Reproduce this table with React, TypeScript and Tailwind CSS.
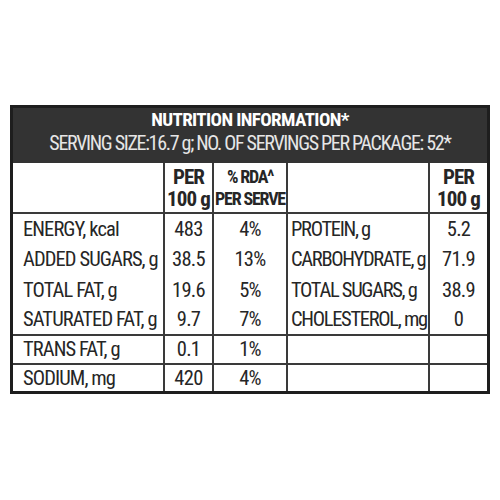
import React from "react";

const font = {
  fontFamily: "'Roboto Condensed', 'DejaVu Sans Condensed', Roboto, sans-serif",
};

const left = [
  ["ENERGY, kcal", "483", "4%"],
  ["ADDED SUGARS, g", "38.5", "13%"],
  ["TOTAL FAT, g", "19.6", "5%"],
  ["SATURATED FAT, g", "9.7", "7%"],
];
const right = [
  ["PROTEIN, g", "5.2"],
  ["CARBOHYDRATE, g", "71.9"],
  ["TOTAL SUGARS, g", "38.9"],
  ["CHOLESTEROL, mg", "0"],
];

const line = "border-[#3a3a3a]";
const txt = "text-[20.5px] tracking-[-0.9px] whitespace-nowrap";
const txtR = "text-[20.5px] tracking-[-1.3px] whitespace-nowrap";
const num = "text-[20.5px] tracking-[-0.7px] whitespace-nowrap";

export default function App() {
  return (
    <div className="w-[500px] h-[500px] bg-white pt-[105px] pl-[10px]" style={font}>
      <div className="w-[480px] border-[3px] border-[#1e1e1e] text-[#262626]">
        <div className="h-[55px] bg-[#333333] flex flex-col items-center pt-[1px]">
          <div className="text-[19px] font-bold text-white leading-[22px] tracking-[-0.6px]">
            NUTRITION INFORMATION*
          </div>
          <div className="text-[20px] text-[#e6e6e6] leading-[24px] tracking-[-1.3px] whitespace-nowrap">
            SERVING SIZE:16.7 g; NO. OF SERVINGS PER PACKAGE: 52*
          </div>
        </div>
        <div className="grid grid-cols-[150px_49px_74px_142px_59px]">
          <div className={`h-[51px] border-b-2 ${line}`} />
          <div className={`h-[51px] border-b-2 border-l-2 ${line} flex flex-col items-center justify-center font-bold text-[21px] leading-[22px] tracking-[-0.9px] whitespace-nowrap`}>
            <span>PER</span>
            <span>100 g</span>
          </div>
          <div className={`h-[51px] border-b-2 border-l-2 ${line} flex flex-col items-center justify-center font-bold text-[18px] leading-[22px] tracking-[-1.2px] whitespace-nowrap`}>
            <span>% RDA^</span>
            <span>PER SERVE</span>
          </div>
          <div className={`h-[51px] border-b-2 border-l-2 ${line}`} />
          <div className={`h-[51px] border-b-2 border-l-2 ${line} flex flex-col items-center justify-center font-bold text-[21px] leading-[22px] tracking-[-0.9px] whitespace-nowrap`}>
            <span>PER</span>
            <span>100 g</span>
          </div>
          {left.map((r, i) => {
            const b = i === 3 ? "border-b-2" : "";
            return (
              <React.Fragment key={i}>
                <div className={`h-[30.5px] ${b} ${line} flex items-center pl-[10px] ${txt}`}>
                  {r[0]}
                </div>
                <div className={`h-[30.5px] ${b} border-l-2 ${line} flex items-center justify-center ${num}`}>
                  {r[1]}
                </div>
                <div className={`h-[30.5px] ${b} border-l-2 ${line} flex items-center justify-center ${num}`}>
                  {r[2]}
                </div>
                <div className={`h-[30.5px] ${b} border-l-2 ${line} flex items-center pl-[3px] ${txtR}`}>
                  {right[i][0]}
                </div>
                <div className={`h-[30.5px] ${b} border-l-2 ${line} flex items-center justify-center ${num}`}>
                  {right[i][1]}
                </div>
              </React.Fragment>
            );
          })}
          {[
            ["TRANS FAT, g", "0.1", "1%", "h-[29px] border-b-2"],
            ["SODIUM, mg", "420", "4%", "h-[26px]"],
          ].map((r, i) => (
            <React.Fragment key={"b" + i}>
              <div className={`${r[3]} ${line} flex items-center pl-[10px] ${txt}`}>
                {r[0]}
              </div>
              <div className={`${r[3]} border-l-2 ${line} flex items-center justify-center ${num}`}>
                {r[1]}
              </div>
              <div className={`${r[3]} border-l-2 ${line} flex items-center justify-center ${num}`}>
                {r[2]}
              </div>
              <div className={`${r[3]} border-l-2 ${line}`} />
              <div className={`${r[3]} border-l-2 ${line}`} />
            </React.Fragment>
          ))}
        </div>
      </div>
    </div>
  );
}
